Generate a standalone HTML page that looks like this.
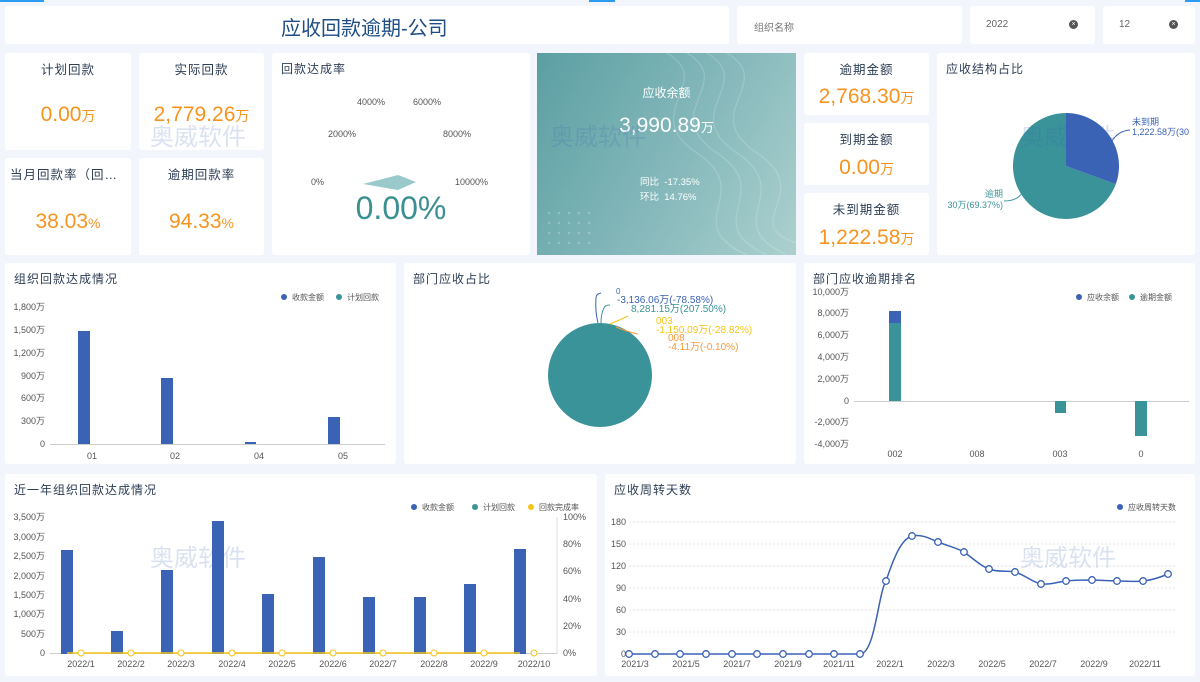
<!DOCTYPE html>
<html><head><meta charset="utf-8"><style>
*{margin:0;padding:0;box-sizing:border-box}
body{width:1200px;height:682px;background:#f2f6fc;font-family:"Liberation Sans","Noto Sans CJK SC",sans-serif;position:relative;overflow:hidden;color:#333}
.p{position:absolute;background:#fff;border-radius:3px}
.t{position:absolute;left:9px;top:7px;font-size:12px;color:#2d3e55;letter-spacing:1px}
.ct{position:absolute;width:100%;text-align:center;font-size:12.5px;color:#2d3e55;letter-spacing:1px}
.v{position:absolute;width:100%;text-align:center;font-size:21px;color:#f7931e}
.v small{font-size:14px}
svg{position:absolute;left:0;top:0}
.ax{font-size:9px;fill:#555}
.wm{position:absolute;font-size:24px;color:#3a62b5;opacity:.18}
</style></head><body>
<div style="position:absolute;left:0;top:0;width:44px;height:2px;background:#2d9bf0"></div>
<div style="position:absolute;left:589px;top:0;width:26px;height:2px;background:#2d9bf0"></div>
<div style="position:absolute;left:1185px;top:0;width:15px;height:2px;background:#2d9bf0"></div>

<div class="p" style="left:5px;top:6px;width:724px;height:38px"><div style="position:absolute;left:276px;top:6px;font-size:20px;color:#1f4e85">应收回款逾期-公司</div></div>
<div class="p" style="left:737px;top:6px;width:225px;height:38px"><span style="position:absolute;left:17px;top:13px;font-size:10px;color:#777">组织名称</span></div>
<div class="p" style="left:970px;top:6px;width:125px;height:38px"><span style="position:absolute;left:16px;top:13px;font-size:10px;color:#666">2022</span><span style="position:absolute;left:99px;top:14px;width:9px;height:9px;border-radius:50%;background:#555;color:#fff;font-size:7px;line-height:9px;text-align:center">×</span></div>
<div class="p" style="left:1103px;top:6px;width:92px;height:38px"><span style="position:absolute;left:16px;top:13px;font-size:10px;color:#666">12</span><span style="position:absolute;left:66px;top:14px;width:9px;height:9px;border-radius:50%;background:#555;color:#fff;font-size:7px;line-height:9px;text-align:center">×</span></div>

<div class="p" style="left:5px;top:53px;width:126px;height:97px"><div class="ct" style="top:6px">计划回款</div><div class="v" style="top:50px">0.00<small>万</small></div></div>
<div class="p" style="left:139px;top:53px;width:125px;height:97px"><div class="ct" style="top:6px">实际回款</div><div class="v" style="top:50px">2,779.26<small>万</small></div></div>
<div class="p" style="left:5px;top:158px;width:126px;height:97px"><div class="ct" style="top:6px;text-align:left;left:5px">当月回款率（回…</div><div class="v" style="top:52px">38.03<small>%</small></div></div>
<div class="p" style="left:139px;top:158px;width:125px;height:97px"><div class="ct" style="top:6px">逾期回款率</div><div class="v" style="top:52px">94.33<small>%</small></div></div>

<div class="p" style="left:272px;top:53px;width:258px;height:202px"><div class="t">回款达成率</div>
<svg width="258" height="202" style="left:0;top:0"><g class="ax">
<text x="85" y="52">4000%</text><text x="141" y="52">6000%</text><text x="56" y="84">2000%</text><text x="171" y="84">8000%</text><text x="39" y="132">0%</text><text x="183" y="132">10000%</text></g>
<polygon points="91,131 126,122 144,129 126,137" fill="#9ac9cb"/>
<text x="129" y="166" text-anchor="middle" font-size="32" fill="#3a8f93">0.00%</text></svg></div>

<div class="p" style="left:537px;top:53px;width:259px;height:202px;background:linear-gradient(120deg,#5b9fa3 0%,#86b9bb 55%,#acd0cf 100%);border-radius:0">
<svg width="259" height="202"><g fill="none" stroke="#fff" stroke-opacity=".18" stroke-width="1.2">
<path d="M150,0 C200,30 120,60 180,100 S160,170 230,202"/><path d="M170,0 C220,30 140,60 200,100 S180,170 250,202"/><path d="M190,0 C240,30 160,60 220,100 S200,170 259,190"/><path d="M130,0 C180,30 100,60 160,100 S140,170 210,202"/></g>
<g fill="#fff" fill-opacity=".25"><circle cx="12" cy="160" r="1.2"/><circle cx="22" cy="160" r="1.2"/><circle cx="32" cy="160" r="1.2"/><circle cx="42" cy="160" r="1.2"/><circle cx="52" cy="160" r="1.2"/><circle cx="12" cy="170" r="1.2"/><circle cx="22" cy="170" r="1.2"/><circle cx="32" cy="170" r="1.2"/><circle cx="42" cy="170" r="1.2"/><circle cx="52" cy="170" r="1.2"/><circle cx="12" cy="180" r="1.2"/><circle cx="22" cy="180" r="1.2"/><circle cx="32" cy="180" r="1.2"/><circle cx="42" cy="180" r="1.2"/><circle cx="52" cy="180" r="1.2"/><circle cx="12" cy="190" r="1.2"/><circle cx="22" cy="190" r="1.2"/><circle cx="32" cy="190" r="1.2"/><circle cx="42" cy="190" r="1.2"/><circle cx="52" cy="190" r="1.2"/></g></svg>
<div style="position:absolute;width:100%;text-align:center;top:31px;color:#fff;font-size:12px">应收余额</div>
<div style="position:absolute;width:100%;text-align:center;top:61px;color:#fff;font-size:21px">3,990.89<span style="font-size:13px">万</span></div>
<div style="position:absolute;left:103px;top:122px;color:#fff;font-size:9.5px;line-height:15px">同比&nbsp;&nbsp;-17.35%<br>环比&nbsp;&nbsp;14.76%</div></div>

<div class="p" style="left:804px;top:53px;width:125px;height:62px"><div class="ct" style="top:6px">逾期金额</div><div class="v" style="top:32px">2,768.30<small>万</small></div></div>
<div class="p" style="left:804px;top:123px;width:125px;height:62px"><div class="ct" style="top:6px">到期金额</div><div class="v" style="top:33px">0.00<small>万</small></div></div>
<div class="p" style="left:804px;top:193px;width:125px;height:62px"><div class="ct" style="top:6px">未到期金额</div><div class="v" style="top:33px">1,222.58<small>万</small></div></div>

<div class="p" style="left:937px;top:53px;width:258px;height:202px"><div class="t">应收结构占比</div>
<svg width="258" height="202">
<path d="M129,113 L178.8,131.1 A53,53 0 1 1 129,60 Z" fill="#3a9399"/>
<path d="M129,113 L129,60 A53,53 0 0 1 178.8,131.1 Z" fill="#3a62b5"/>
<path d="M175,88 q6,-10 18,-11" stroke="#3a62b5" fill="none"/><text x="195" y="72" font-size="9" fill="#3a62b5">未到期</text><text x="195" y="82" font-size="9" fill="#3a62b5">1,222.58万(30</text>
<path d="M85,140 q-5,8 -18,8" stroke="#3a9399" fill="none"/><text x="66" y="144" font-size="9" fill="#3a9399" text-anchor="end">逾期</text><text x="66" y="155" font-size="9" fill="#3a9399" text-anchor="end">30万(69.37%)</text></svg></div>

<div class="p" style="left:5px;top:263px;width:391px;height:201px"><div class="t">组织回款达成情况</div>
<svg width="391" height="201"><circle cx="279" cy="34" r="3" fill="#3a62b5"/><text x="287" y="37" font-size="8" fill="#555">收款金额</text><circle cx="334" cy="34" r="3" fill="#3a9399"/><text x="342" y="37" font-size="8" fill="#555">计划回款</text>
<g class="ax" text-anchor="end"><text x="40" y="47">1,800万</text><text x="40" y="70">1,500万</text><text x="40" y="93">1,200万</text><text x="40" y="116">900万</text><text x="40" y="138">600万</text><text x="40" y="161">300万</text><text x="40" y="184">0</text></g>
<line x1="45" y1="181.5" x2="380" y2="181.5" stroke="#ccc"/>
<g fill="#3a62b5"><rect x="73" y="68" width="12" height="113"/><rect x="156" y="115" width="12" height="66"/><rect x="240" y="179" width="11" height="2"/><rect x="323" y="154" width="12" height="27"/></g>
<g class="ax" text-anchor="middle"><text x="87" y="196">01</text><text x="170" y="196">02</text><text x="254" y="196">04</text><text x="338" y="196">05</text></g></svg></div>

<div class="p" style="left:404px;top:263px;width:392px;height:201px"><div class="t">部门应收占比</div>
<svg width="392" height="201"><circle cx="196" cy="112" r="52" fill="#3a9399"/>
<path d="M194,60 q-3,-12 -2,-25 q0,-4 5,-5" stroke="#3a62b5" fill="none"/><path d="M197,60 q0,-10 3,-15 q1,-3 6,-3" stroke="#3a9399" fill="none"/><path d="M206,61 q10,-4 18,-8" stroke="#f5c518" fill="none"/><path d="M212,64 q12,5 22,7" stroke="#f79a3e" fill="none"/>
<g font-size="10"><text x="212" y="31" fill="#3a62b5" font-size="8">0</text><text x="213" y="40" fill="#3a62b5">-3,136.06万(-78.58%)</text><text x="227" y="49" fill="#3a9399">8,281.15万(207.50%)</text><text x="252" y="61" fill="#f5c518">003</text><text x="252" y="70" fill="#f5c518">-1,150.09万(-28.82%)</text><text x="264" y="78" fill="#f79a3e">008</text><text x="264" y="87" fill="#f79a3e">-4.11万(-0.10%)</text></g></svg></div>

<div class="p" style="left:804px;top:263px;width:391px;height:201px"><div class="t">部门应收逾期排名</div>
<svg width="391" height="201"><circle cx="275" cy="34" r="3" fill="#3a62b5"/><text x="283" y="37" font-size="8" fill="#555">应收余额</text><circle cx="328" cy="34" r="3" fill="#3a9399"/><text x="336" y="37" font-size="8" fill="#555">逾期金额</text>
<g class="ax" text-anchor="end"><text x="45" y="32">10,000万</text><text x="45" y="53">8,000万</text><text x="45" y="75">6,000万</text><text x="45" y="97">4,000万</text><text x="45" y="119">2,000万</text><text x="45" y="141">0</text><text x="45" y="162">-2,000万</text><text x="45" y="184">-4,000万</text></g>
<line x1="50" y1="138.5" x2="385" y2="138.5" stroke="#ccc"/>
<rect x="85" y="48" width="12" height="12" fill="#3a62b5"/><rect x="85" y="60" width="12" height="78" fill="#3a9399"/><rect x="251" y="138" width="11" height="12" fill="#3a9399"/><rect x="331" y="138" width="12" height="35" fill="#3a9399"/>
<g class="ax" text-anchor="middle"><text x="91" y="194">002</text><text x="173" y="194">008</text><text x="256" y="194">003</text><text x="337" y="194">0</text></g></svg></div>

<div class="p" style="left:5px;top:474px;width:592px;height:202px"><div class="t">近一年组织回款达成情况</div>
<svg width="592" height="202"><circle cx="409" cy="33" r="3" fill="#3a62b5"/><text x="417" y="36" font-size="8" fill="#555">收款金额</text><circle cx="470" cy="33" r="3" fill="#3a9399"/><text x="478" y="36" font-size="8" fill="#555">计划回款</text><circle cx="526" cy="33" r="3" fill="#f5c518"/><text x="534" y="36" font-size="8" fill="#555">回款完成率</text>
<g class="ax" text-anchor="end"><text x="40" y="46">3,500万</text><text x="40" y="66">3,000万</text><text x="40" y="85">2,500万</text><text x="40" y="105">2,000万</text><text x="40" y="124">1,500万</text><text x="40" y="143">1,000万</text><text x="40" y="163">500万</text><text x="40" y="182">0</text></g>
<g class="ax"><text x="558" y="46">100%</text><text x="558" y="73">80%</text><text x="558" y="100">60%</text><text x="558" y="128">40%</text><text x="558" y="155">20%</text><text x="558" y="182">0%</text></g>
<line x1="45" y1="179.5" x2="552" y2="179.5" stroke="#ccc"/><line x1="552" y1="43" x2="552" y2="180" stroke="#ddd"/>
<g fill="#3a62b5"><rect x="56" y="76" width="12" height="104"/><rect x="106" y="157" width="12" height="23"/><rect x="156" y="96" width="12" height="84"/><rect x="207" y="47" width="12" height="133"/><rect x="257" y="120" width="12" height="60"/><rect x="308" y="83" width="12" height="97"/><rect x="358" y="123" width="12" height="57"/><rect x="409" y="123" width="12" height="57"/><rect x="459" y="110" width="12" height="70"/><rect x="509" y="75" width="12" height="105"/></g>
<line x1="62" y1="179" x2="515" y2="179" stroke="#f5c518" stroke-width="1.5"/>
<g fill="#fff" stroke="#f5c518" stroke-width="1"><circle cx="76" cy="179" r="3"/><circle cx="126" cy="179" r="3"/><circle cx="176" cy="179" r="3"/><circle cx="227" cy="179" r="3"/><circle cx="277" cy="179" r="3"/><circle cx="328" cy="179" r="3"/><circle cx="378" cy="179" r="3"/><circle cx="429" cy="179" r="3"/><circle cx="479" cy="179" r="3"/><circle cx="529" cy="179" r="3"/></g>
<g class="ax" text-anchor="middle"><text x="76" y="193">2022/1</text><text x="126" y="193">2022/2</text><text x="176" y="193">2022/3</text><text x="227" y="193">2022/4</text><text x="277" y="193">2022/5</text><text x="328" y="193">2022/6</text><text x="378" y="193">2022/7</text><text x="429" y="193">2022/8</text><text x="479" y="193">2022/9</text><text x="529" y="193">2022/10</text></g></svg></div>

<div class="p" style="left:605px;top:474px;width:590px;height:202px"><div class="t">应收周转天数</div>
<svg width="590" height="202"><circle cx="515" cy="33" r="3" fill="#3a62b5"/><text x="523" y="36" font-size="8" fill="#555">应收周转天数</text>
<g stroke="#e4e4e4" stroke-dasharray="2,2"><line x1="24" y1="48" x2="570" y2="48"/><line x1="24" y1="70" x2="570" y2="70"/><line x1="24" y1="92" x2="570" y2="92"/><line x1="24" y1="114" x2="570" y2="114"/><line x1="24" y1="136" x2="570" y2="136"/><line x1="24" y1="158" x2="570" y2="158"/></g>
<g class="ax" text-anchor="end"><text x="21" y="51">180</text><text x="21" y="73">150</text><text x="21" y="95">120</text><text x="21" y="117">90</text><text x="21" y="139">60</text><text x="21" y="161">30</text><text x="21" y="183">0</text></g>
<path d="M24,180 L255,180 C270,180 273,120 281,107 C290,80 297,65 307,62 C318,60 325,65 333,68 C343,72 352,74 359,78 C370,86 376,92 384,95 C395,99 403,96 410,98 C420,101 427,108 436,110 C446,111 452,108 461,107 C470,106 480,106 487,106 L512,107 C522,107 530,108 538,107 C548,106 556,103 563,100" fill="none" stroke="#3a62b5" stroke-width="1.5"/>
<g fill="#fff" stroke="#3a62b5" stroke-width="1.3"><circle cx="24" cy="180" r="3.3"/><circle cx="50" cy="180" r="3.3"/><circle cx="75" cy="180" r="3.3"/><circle cx="101" cy="180" r="3.3"/><circle cx="127" cy="180" r="3.3"/><circle cx="152" cy="180" r="3.3"/><circle cx="178" cy="180" r="3.3"/><circle cx="204" cy="180" r="3.3"/><circle cx="229" cy="180" r="3.3"/><circle cx="255" cy="180" r="3.3"/><circle cx="281" cy="107" r="3.3"/><circle cx="307" cy="62" r="3.3"/><circle cx="333" cy="68" r="3.3"/><circle cx="359" cy="78" r="3.3"/><circle cx="384" cy="95" r="3.3"/><circle cx="410" cy="98" r="3.3"/><circle cx="436" cy="110" r="3.3"/><circle cx="461" cy="107" r="3.3"/><circle cx="487" cy="106" r="3.3"/><circle cx="512" cy="107" r="3.3"/><circle cx="538" cy="107" r="3.3"/><circle cx="563" cy="100" r="3.3"/></g>
<g class="ax" text-anchor="middle"><text x="30" y="193">2021/3</text><text x="81" y="193">2021/5</text><text x="132" y="193">2021/7</text><text x="183" y="193">2021/9</text><text x="234" y="193">2021/11</text><text x="285" y="193">2022/1</text><text x="336" y="193">2022/3</text><text x="387" y="193">2022/5</text><text x="438" y="193">2022/7</text><text x="489" y="193">2022/9</text><text x="540" y="193">2022/11</text></g></svg></div>

<div class="wm" style="left:150px;top:117px">奥威软件</div>
<div class="wm" style="left:550px;top:117px">奥威软件</div>
<div class="wm" style="left:1020px;top:117px">奥威软件</div>
<div class="wm" style="left:150px;top:538px">奥威软件</div>
<div class="wm" style="left:1020px;top:538px">奥威软件</div>
</body></html>
